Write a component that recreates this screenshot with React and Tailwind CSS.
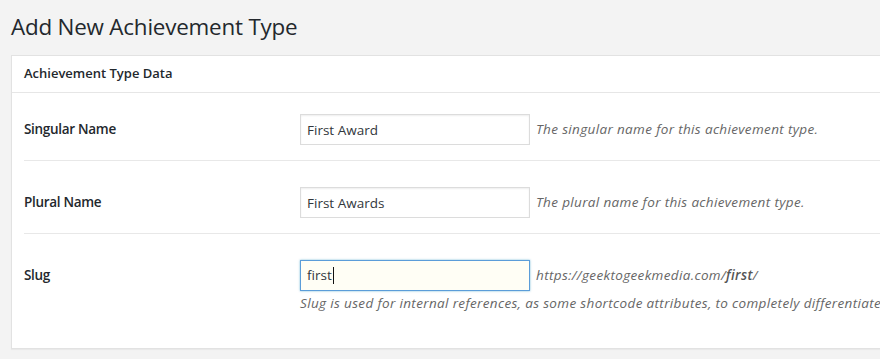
export default function App() {
  return (
    <div className="w-[880px] h-[359px] overflow-hidden bg-[#f3f3f3] text-[#23282d] font-['Open_Sans',sans-serif]">
      <h1 className="pl-[11px] pt-[12px] h-[55px] text-[22.4px] leading-[29px] font-normal tracking-[-0.2px]">
        Add New Achievement Type
      </h1>

      <div className="ml-[11px] w-[1000px] bg-white border border-[#e2e2e2] shadow-[0_1px_1px_rgba(0,0,0,0.04)]">
        <div className="h-[37px] px-3 flex items-center border-b border-[#e6e6e6]">
          <h2 className="text-[13px] font-semibold">Achievement Type Data</h2>
        </div>

        <div className="px-3 pb-[35px]">
          {/* Singular Name */}
          <div className="flex items-center pt-[21px] pb-[15px] border-b border-[#e8e8e8]">
            <label className="w-[276px] shrink-0 text-[13.5px] font-semibold tracking-[-0.3px]">Singular Name</label>
            <input
              readOnly
              value="First Award"
              className="w-[230px] h-[31px] px-[6px] border border-[#dcdcdc] shadow-[inset_0_1px_2px_rgba(0,0,0,0.07)] text-[13.5px] text-[#32373c] outline-none"
            />
            <span className="ml-[6px] text-[13.5px] italic tracking-[0.35px] text-[#666]">The singular name for this achievement type.</span>
          </div>

          {/* Plural Name */}
          <div className="flex items-center pt-[26px] pb-[15px] border-b border-[#e8e8e8]">
            <label className="w-[276px] shrink-0 text-[13.5px] font-semibold tracking-[-0.3px]">Plural Name</label>
            <input
              readOnly
              value="First Awards"
              className="w-[230px] h-[31px] px-[6px] border border-[#dcdcdc] shadow-[inset_0_1px_2px_rgba(0,0,0,0.07)] text-[13.5px] text-[#32373c] outline-none"
            />
            <span className="ml-[6px] text-[13.5px] italic tracking-[0.35px] text-[#666]">The plural name for this achievement type.</span>
          </div>

          {/* Slug */}
          <div className="flex items-start pt-[26px]">
            <label className="w-[276px] shrink-0 h-[31px] flex items-center text-[13.5px] font-semibold tracking-[-0.3px]">Slug</label>
            <div className="flex-1 min-w-0">
              <div className="flex items-center">
                <div className="w-[230px] h-[31px] px-[6px] flex items-center border border-[#5b9dd9] bg-[#fffef5] shadow-[0_0_2px_rgba(30,140,190,0.6)] text-[13.5px] text-[#32373c]">
                  first<span className="inline-block w-px h-[17px] bg-[#111] ml-px" />
                </div>
                <span className="ml-[6px] text-[13.5px] italic tracking-[0.35px] text-[#666]">
                  https://geektogeekmedia.com/<b className="font-semibold text-[#555]">first</b>/
                </span>
              </div>
              <p className="mt-[2px] text-[13.5px] italic tracking-[0.35px] text-[#666] whitespace-nowrap">
                Slug is used for internal references, as some shortcode attributes, to completely differentiate this achievement type from any other.
              </p>
            </div>
          </div>
        </div>
      </div>
    </div>
  );
}
